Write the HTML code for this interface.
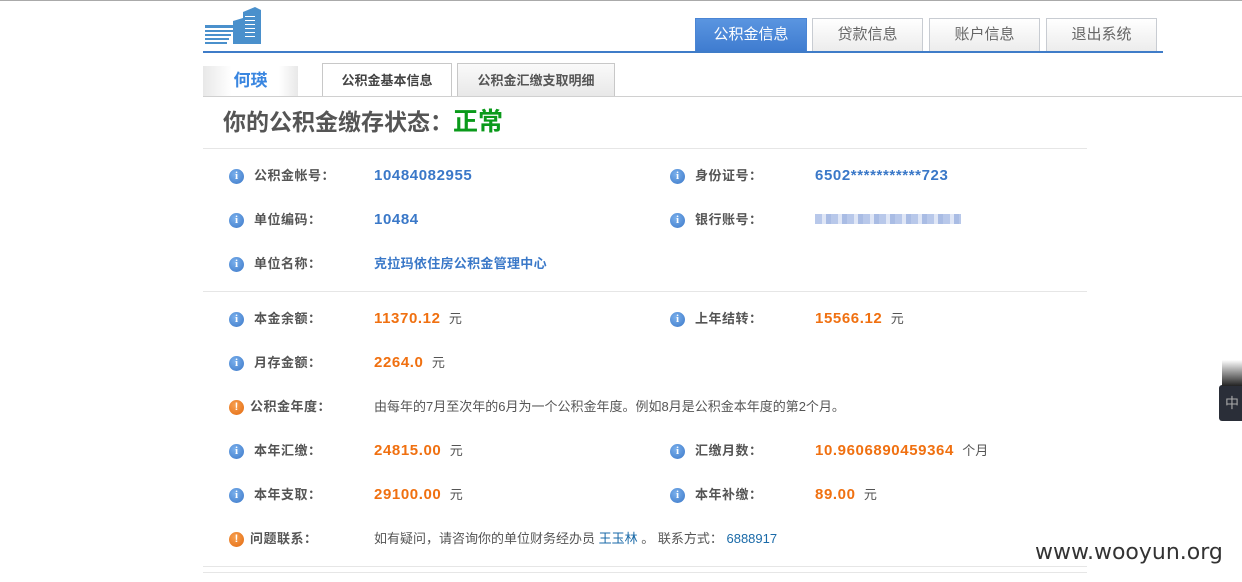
<!DOCTYPE html>
<html><head><meta charset="utf-8"><style>
*{margin:0;padding:0;box-sizing:border-box}
body{width:1242px;height:582px;background:#fff;position:relative;overflow:hidden;font-family:"Liberation Sans","Noto Sans CJK SC",sans-serif;font-size:13px;color:#555}
.a{position:absolute;white-space:nowrap}
.tab{position:absolute;top:18px;height:33px;border:1px solid #c8ccd2;border-bottom:none;background:linear-gradient(#fff,#ececec);color:#666;font-size:15px;text-align:center;line-height:32px}
.ic{position:absolute;width:15px;height:15px;border-radius:50%;color:#fff;font:bold 11px/15px "Liberation Serif",serif;text-align:center}
.i{background:radial-gradient(circle at 40% 35%,#7ab0ec,#3c78c8)}
.w{background:radial-gradient(circle at 40% 35%,#f7a050,#e36a10);font-family:"Liberation Sans",sans-serif}
.lb{position:absolute;font-weight:bold;color:#555;font-size:13px;line-height:16px;white-space:nowrap;letter-spacing:0.5px}
.v{position:absolute;font-weight:bold;font-size:15px;line-height:16px;letter-spacing:0.6px;white-space:nowrap}
.u{color:#555;font-weight:normal;font-size:13px;letter-spacing:0}
.t{position:absolute;line-height:16px;white-space:nowrap;color:#555}
.bl{color:#3a78c8}.or{color:#f07010}
.sep{position:absolute;left:203px;width:884px;height:1px;background:#e6e6e6}
</style></head><body>
<div class="a" style="left:0;top:0;width:1242px;height:1px;background:#aaa"></div>
<svg class="a" style="left:205px;top:6px" width="58" height="38" viewBox="0 0 58 38">
<g fill="#4a90cc"><rect x="0" y="19" width="30" height="3"/><rect x="0" y="24" width="28" height="2"/><rect x="0" y="28" width="26" height="2"/><rect x="0" y="32" width="24" height="2"/><rect x="0" y="36" width="22" height="2"/>
<path d="M28 15 L38 12 L38 38 L28 38Z"/><path d="M38 6 L50 1 L56 4 L56 38 L38 38Z"/></g>
<g fill="#fff"><rect x="40" y="10" width="10" height="1"/><rect x="40" y="14" width="10" height="1"/><rect x="40" y="18" width="10" height="1"/><rect x="40" y="22" width="10" height="1"/><rect x="40" y="26" width="10" height="1"/><rect x="40" y="30" width="10" height="1"/></g></svg>
<div class="tab" style="left:695px;width:112px;background:linear-gradient(#5a95e0,#3f7cd0);color:#fff;border-color:#4a85d4">公积金信息</div>
<div class="tab" style="left:812px;width:111px">贷款信息</div>
<div class="tab" style="left:929px;width:111px">账户信息</div>
<div class="tab" style="left:1046px;width:111px">退出系统</div>
<div class="a" style="left:203px;top:51px;width:960px;height:2px;background:#3f7cc8"></div>
<div class="a" style="left:203px;top:66px;width:95px;height:30px;background:linear-gradient(90deg,#e8e8e8,#fff 30%,#fff 80%,#e8e8e8);color:#3a86e0;font-size:17px;font-weight:bold;text-align:center;line-height:30px">何瑛</div>
<div class="a" style="left:322px;top:63px;width:130px;height:34px;border:1px solid #c8c8c8;border-bottom:none;background:#fff;font-weight:bold;font-size:13px;text-align:center;line-height:33px;color:#444">公积金基本信息</div>
<div class="a" style="left:457px;top:63px;width:158px;height:33px;border:1px solid #c8c8c8;border-bottom:none;background:linear-gradient(#fafafa,#e8e8e8);font-weight:bold;font-size:13px;text-align:center;line-height:33px;color:#555">公积金汇缴支取明细</div>
<div class="a" style="left:203px;top:96px;width:1039px;height:1px;background:#d0d0d0"></div>
<div class="a" style="left:223px;top:107px;font-size:23px;line-height:30px;font-weight:bold;color:#555">你的公积金缴存状态：<span style="color:#0a9a1a;font-size:25px">正常</span></div>
<div class="sep" style="top:148px"></div>
<div class="sep" style="top:291px"></div>
<div class="sep" style="top:566px"></div>
<div class="sep" style="top:572px"></div>

<div class="ic i" style="left:229px;top:169px">i</div><div class="lb" style="left:254px;top:168px">公积金帐号：</div><div class="v bl" style="left:374px;top:168px">10484082955</div>
<div class="ic i" style="left:670px;top:169px">i</div><div class="lb" style="left:695px;top:168px">身份证号：</div><div class="v bl" style="left:815px;top:168px">6502***********723</div>
<div class="ic i" style="left:229px;top:213px">i</div><div class="lb" style="left:254px;top:212px">单位编码：</div><div class="v bl" style="left:374px;top:212px">10484</div>
<div class="ic i" style="left:670px;top:213px">i</div><div class="lb" style="left:695px;top:212px">银行账号：</div><div class="a" style="left:815px;top:214px;width:146px;height:10px;background:repeating-linear-gradient(90deg,#b8c8ea 0 7px,#dfe6f6 7px 11px,#a9bce4 11px 16px)"></div>
<div class="ic i" style="left:229px;top:257px">i</div><div class="lb" style="left:254px;top:256px">单位名称：</div><div class="v bl" style="left:374px;top:256px;font-size:13px;letter-spacing:0.3px">克拉玛依住房公积金管理中心</div>

<div class="ic i" style="left:229px;top:312px">i</div><div class="lb" style="left:254px;top:311px">本金余额：</div><div class="v or" style="left:374px;top:311px">11370.12 <span class="u">&nbsp;元</span></div>
<div class="ic i" style="left:670px;top:312px">i</div><div class="lb" style="left:695px;top:311px">上年结转：</div><div class="v or" style="left:815px;top:311px">15566.12 <span class="u">&nbsp;元</span></div>
<div class="ic i" style="left:229px;top:356px">i</div><div class="lb" style="left:254px;top:355px">月存金额：</div><div class="v or" style="left:374px;top:355px">2264.0 <span class="u">&nbsp;元</span></div>
<div class="ic w" style="left:229px;top:400px">!</div><div class="lb" style="left:250px;top:399px">公积金年度：</div><div class="t" style="left:374px;top:399px">由每年的7月至次年的6月为一个公积金年度。例如8月是公积金本年度的第2个月。</div>
<div class="ic i" style="left:229px;top:444px">i</div><div class="lb" style="left:254px;top:443px">本年汇缴：</div><div class="v or" style="left:374px;top:443px">24815.00 <span class="u">&nbsp;元</span></div>
<div class="ic i" style="left:670px;top:444px">i</div><div class="lb" style="left:695px;top:443px">汇缴月数：</div><div class="v or" style="left:815px;top:443px">10.9606890459364 <span class="u">&nbsp;个月</span></div>
<div class="ic i" style="left:229px;top:488px">i</div><div class="lb" style="left:254px;top:487px">本年支取：</div><div class="v or" style="left:374px;top:487px">29100.00 <span class="u">&nbsp;元</span></div>
<div class="ic i" style="left:670px;top:488px">i</div><div class="lb" style="left:695px;top:487px">本年补缴：</div><div class="v or" style="left:815px;top:487px">89.00 <span class="u">&nbsp;元</span></div>
<div class="ic w" style="left:229px;top:532px">!</div><div class="lb" style="left:250px;top:531px">问题联系：</div><div class="t" style="left:374px;top:531px">如有疑问，请咨询你的单位财务经办员 <span style="color:#1a6aa8">王玉林</span> 。 联系方式： <span style="color:#1a6aa8">6888917</span></div>

<div class="a" style="left:1219px;top:385px;width:30px;height:36px;background:#2a2e38;border-radius:3px;color:#aaa;font-size:14px;line-height:36px;padding-left:6px">中</div>
<div class="a" style="left:1222px;top:360px;width:20px;height:26px;background:linear-gradient(#fff,#222)"></div>
<div class="a" style="left:1035px;top:540px;font-size:22px;color:#333;font-family:'DejaVu Sans',sans-serif">www.wooyun.org</div>
</body></html>
